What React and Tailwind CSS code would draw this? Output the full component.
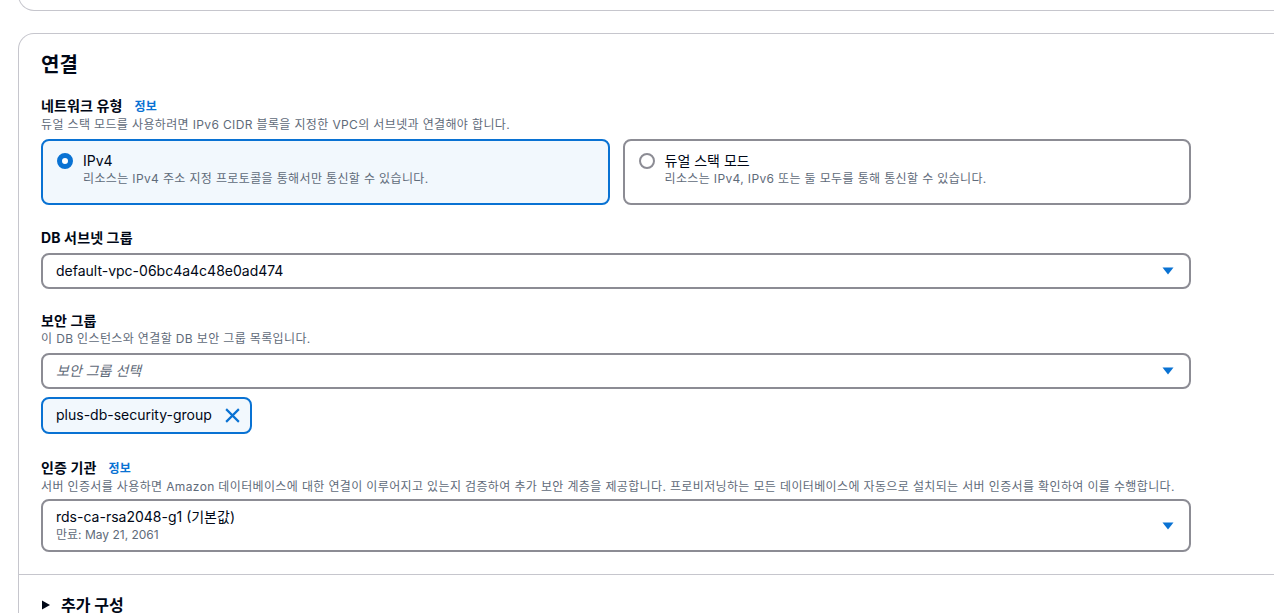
import React from "react";

const font = {
  fontFamily: 'Inter, "Noto Sans CJK KR", sans-serif',
};

function Caret() {
  return (
    <svg width="12" height="8" viewBox="0 0 12 8" className="shrink-0">
      <path d="M0.5 0.5 L11.5 0.5 L6 7.5 Z" fill="#0972d3" />
    </svg>
  );
}

function Select({ children }) {
  return (
    <div className="flex items-center justify-between rounded-lg border-2 border-[#8c8c94] bg-white pl-[13px] pr-[15px]">
      <div className="min-w-0">{children}</div>
      <Caret />
    </div>
  );
}

function Label({ children, info }) {
  return (
    <div className="flex items-baseline gap-[12px] text-[14px] font-bold leading-[20px] tracking-[0.01em] text-[#000716]">
      <span>{children}</span>
      {info && <span className="text-[12px] font-bold text-[#0972d3]">정보</span>}
    </div>
  );
}

function Desc({ children }) {
  return <div className="text-[12px] leading-[16px] tracking-[0.03em] text-[#5f6b7a]">{children}</div>;
}

function Tile({ selected, title, desc }) {
  return (
    <div
      className={
        "flex flex-1 items-start gap-[10px] rounded-lg border-2 px-[14px] pt-[10px] pb-[16px] " +
        (selected ? "border-[#0972d3] bg-[#f2f8fd]" : "border-[#8c8c94] bg-white")
      }
    >
      <div className="mt-[2px] flex h-[16px] w-[16px] shrink-0 items-center justify-center">
        {selected ? (
          <span className="h-[16px] w-[16px] rounded-full border-[5px] border-[#0972d3] bg-white" />
        ) : (
          <span className="h-[16px] w-[16px] rounded-full border-2 border-[#8c8c94] bg-white" />
        )}
      </div>
      <div>
        <div className="text-[14px] leading-[20px] text-[#000716]">{title}</div>
        <div className="text-[12px] leading-[16px] tracking-[0.03em] text-[#5f6b7a]">{desc}</div>
      </div>
    </div>
  );
}

export default function App() {
  return (
    <div className="h-[613px] overflow-hidden bg-white pl-[18px]" style={font}>
      {/* tail of the previous card */}
      <div className="mt-[-20px] mr-[-30px] h-[31px] rounded-b-2xl border border-t-0 border-[#c6c6cd]" />

      <div className="mt-[22px] mr-[-30px] rounded-t-2xl border border-b-0 border-[#c6c6cd]">
        <div className="w-[1172px] pl-[22px] pt-[17px] pb-[22px]">
          <h2 className="text-[20px] font-bold leading-[28px] text-[#000716]">연결</h2>

          <div className="mt-[17px]">
            <Label info>네트워크 유형</Label>
            <Desc>듀얼 스택 모드를 사용하려면 IPv6 CIDR 블록을 지정한 VPC의 서브넷과 연결해야 합니다.</Desc>
            <div className="mt-[6px] flex gap-[13px]">
              <Tile selected title="IPv4" desc="리소스는 IPv4 주소 지정 프로토콜을 통해서만 통신할 수 있습니다." />
              <Tile title="듀얼 스택 모드" desc="리소스는 IPv4, IPv6 또는 둘 모두를 통해 통신할 수 있습니다." />
            </div>
          </div>

          <div className="mt-[23px]">
            <Label>DB 서브넷 그룹</Label>
            <div className="mt-[5px]">
              <Select>
                <div className="py-[6px] text-[14px] leading-[20px] text-[#000716]">default-vpc-06bc4a4c48e0ad474</div>
              </Select>
            </div>
          </div>

          <div className="mt-[22px]">
            <Label>보안 그룹</Label>
            <Desc>이 DB 인스턴스와 연결할 DB 보안 그룹 목록입니다.</Desc>
            <div className="mt-[6px]">
              <Select>
                <div className="py-[6px] text-[14px] italic leading-[20px] text-[#5f6b7a]">보안 그룹 선택</div>
              </Select>
            </div>
            <div className="mt-[8px] flex">
              <div className="flex items-center gap-[12px] rounded-lg border-2 border-[#0972d3] bg-[#f2f8fd] pt-[6px] pb-[7px] pl-[13px] pr-[9px]">
                <span className="text-[14px] leading-[20px] text-[#000716]">plus-db-security-group</span>
                <svg width="17" height="17" viewBox="0 0 16 16" fill="none">
                  <path d="M2 2 L14 14 M14 2 L2 14" stroke="#0972d3" strokeWidth="2" />
                </svg>
              </div>
            </div>
          </div>

          <div className="mt-[24px]">
            <Label info>인증 기관</Label>
            <Desc>
              서버 인증서를 사용하면 Amazon 데이터베이스에 대한 연결이 이루어지고 있는지 검증하여 추가 보안 계층을 제공합니다. 프로비저닝하는 모든 데이터베이스에 자동으로 설치되는 서버 인증서를 확인하여 이를 수행합니다.
            </Desc>
            <div className="mt-[4px]">
              <Select>
                <div className="pt-[6px] pb-[7px]">
                  <div className="text-[14px] leading-[20px] text-[#000716]">rds-ca-rsa2048-g1 (기본값)</div>
                  <div className="text-[12px] leading-[16px] text-[#5f6b7a]">만료: May 21, 2061</div>
                </div>
              </Select>
            </div>
          </div>
        </div>

        <div className="border-t border-[#c6c6cd] pl-[22px] pt-[20px]">
          <div className="flex items-center gap-[10px]">
            <svg width="10" height="10" viewBox="0 0 10 10">
              <path d="M1 0.5 L9 5 L1 9.5 Z" fill="#000716" />
            </svg>
            <span className="text-[16px] font-bold leading-[20px] text-[#000716]">추가 구성</span>
          </div>
        </div>
      </div>
    </div>
  );
}
